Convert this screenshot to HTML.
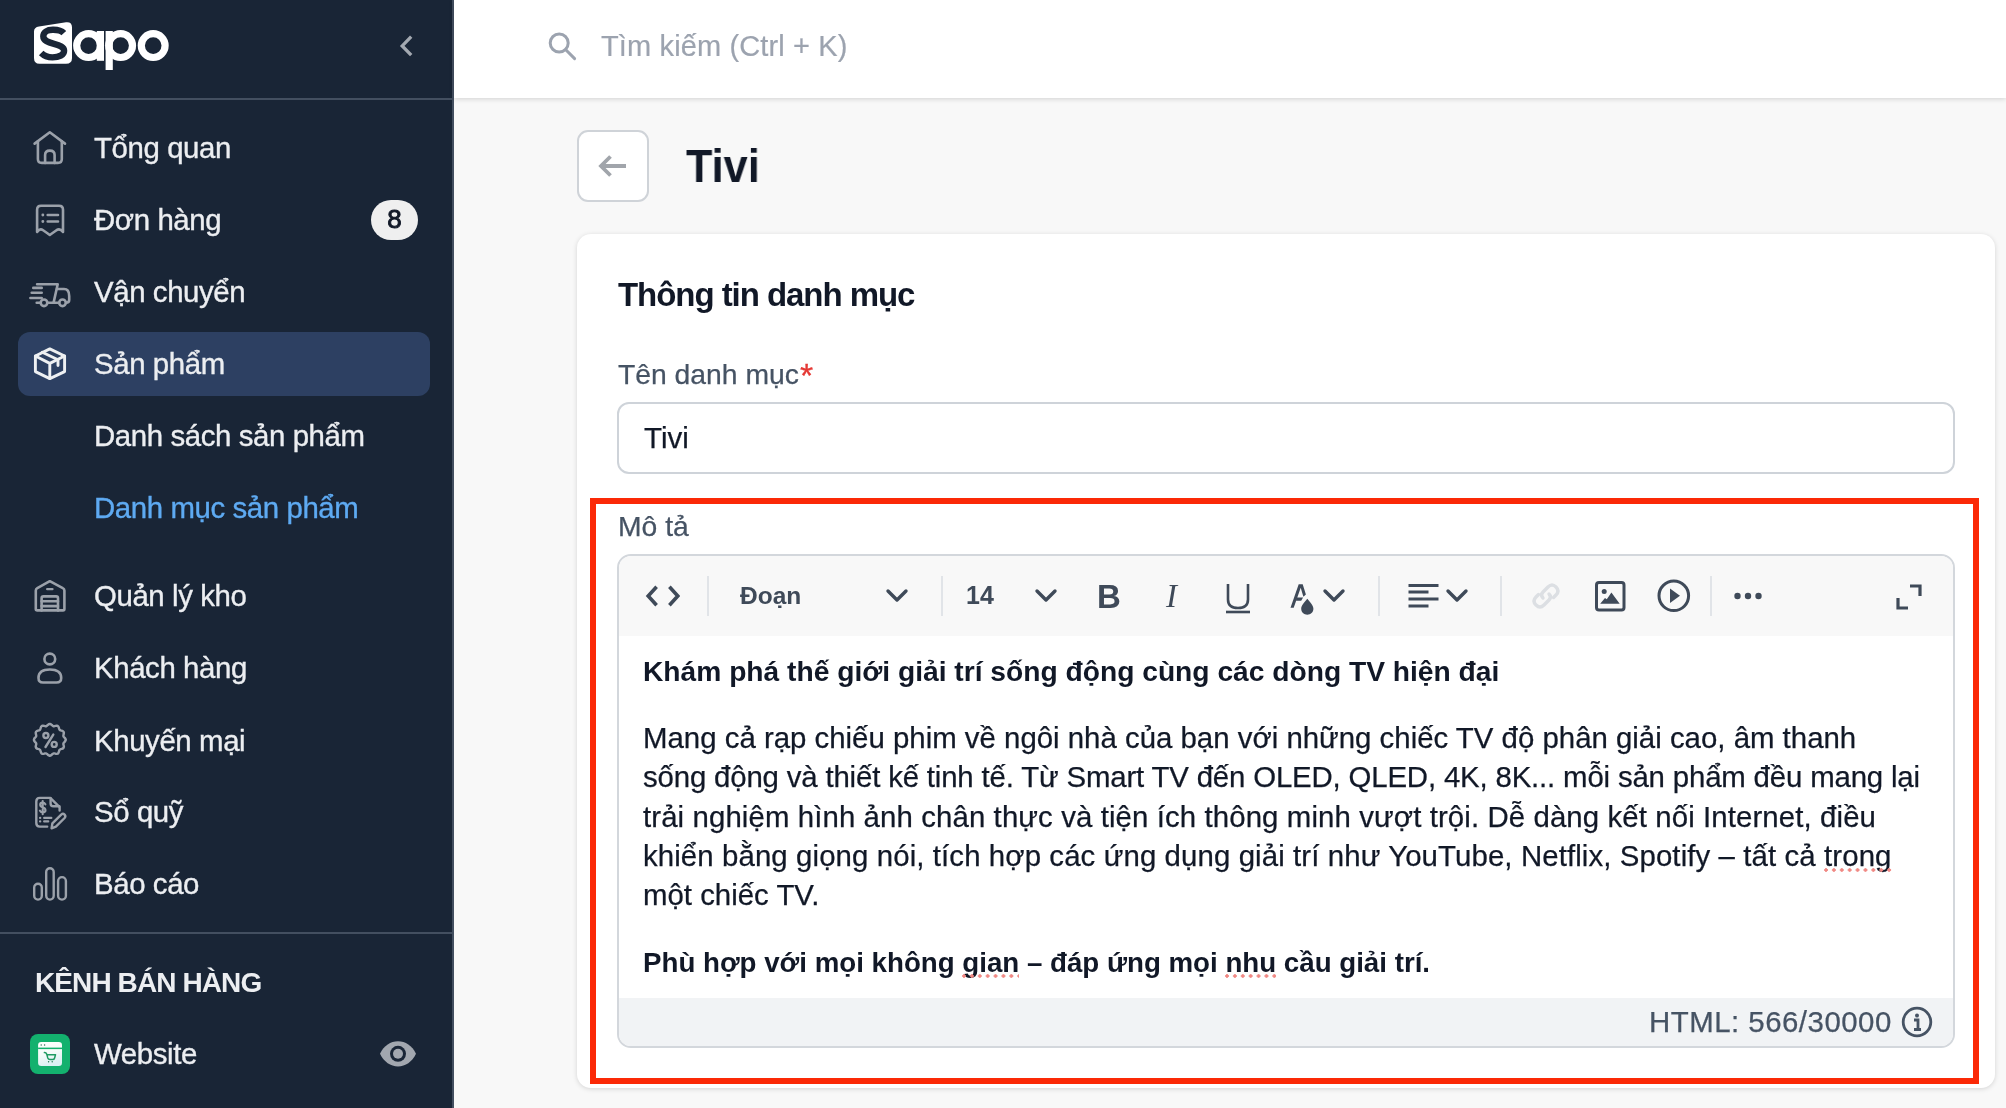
<!DOCTYPE html>
<html lang="vi">
<head>
<meta charset="utf-8">
<title>Sapo - Tivi</title>
<style>
*{box-sizing:border-box;margin:0;padding:0}
html,body{width:2006px;height:1108px;overflow:hidden}
body{position:relative;background:#f8f8f8;font-family:"Liberation Sans",sans-serif;color:#111827}
.t{position:absolute;line-height:1;white-space:nowrap;will-change:transform}
.abs{position:absolute}
#sb{position:absolute;left:0;top:0;width:452px;height:1108px;background:#192536}
#sbb{position:absolute;left:452px;top:0;width:2px;height:1108px;background:#434f60}
.hr{position:absolute;left:0;width:452px;height:2px;background:#434f60}
.nav{font-size:29.4px;letter-spacing:-0.4px;color:#eceef1;-webkit-text-stroke:0.35px}
.ic{position:absolute;fill:none;stroke:#9ba1aa;stroke-width:2.6;stroke-linecap:round;stroke-linejoin:round}
#hdr{position:absolute;left:454px;top:0;width:1552px;height:98px;background:#fff;box-shadow:0 1px 5px rgba(0,0,0,.16)}
.card{position:absolute;left:577px;top:234px;width:1418px;height:854px;background:#fff;border-radius:14px;box-shadow:0 1px 5px rgba(0,0,0,.15)}
.tb{position:absolute;fill:none;stroke:#3f4a59;stroke-width:3.4;stroke-linecap:round;stroke-linejoin:round}
.sep{position:absolute;top:576px;width:2px;height:40px;background:#e1e4e8}
.body{font-size:29.4px;color:#111827;-webkit-text-stroke:0.25px}
.sp{position:relative}
.sp::after{content:"";position:absolute;left:0;right:0;bottom:0.2px;height:4px;background:radial-gradient(circle at 2px 2px,#f08883 1.5px,transparent 2px) 0 0/7.9px 4px repeat-x}
</style>
</head>
<body>
<!-- SIDEBAR -->
<div id="sb"></div>
<div id="sbb"></div>
<div class="hr" style="top:98px"></div>
<div class="hr" style="top:932px"></div>

<!-- logo -->
<svg class="abs" style="left:0;top:0" width="200" height="90" viewBox="0 0 200 90">
  <path d="M39 26.5 L66 22.2 Q72 21.5 72 27.5 L72 58 Q72 63.8 66 63.8 L39.5 63.8 Q34 63.8 34 58 L34 31.5 Q34 27.3 39 26.5 Z" fill="#fff"/>
  <path d="M63.8 33.2 C60.6 29.6 56.6 29.75 52.8 29.75 C47 29.75 43.3 32.3 43.3 36.3 C43.3 40.8 48.5 42.3 54 43.8 C60 45.4 64.1 47 64.1 50.8 C64.1 55 59 57.4 52.5 57.4 C47.5 57.4 43.8 55.6 41.2 53" fill="none" stroke="#192536" stroke-width="6.4"/>
  <circle cx="88.6" cy="45.6" r="11.9" fill="none" stroke="#fff" stroke-width="7.2"/>
  <rect x="96.8" y="31" width="7.2" height="29.8" fill="#fff"/>
  <circle cx="120.6" cy="45.6" r="11.9" fill="none" stroke="#fff" stroke-width="7.2"/>
  <rect x="105.6" y="31" width="7.2" height="39" fill="#fff"/>
  <circle cx="153.2" cy="45.6" r="11.9" fill="none" stroke="#fff" stroke-width="7.2"/>
</svg>
<!-- collapse chevron -->
<svg class="ic" style="left:396px;top:32px;stroke-linecap:butt;stroke-linejoin:miter;stroke:#a3a9b1" width="20" height="28" viewBox="0 0 20 28"><path d="M15.2 4.6 L6.2 13.9 L15.2 23.2" stroke-width="3.3"/></svg>

<!-- nav icons -->
<!-- home -->
<svg class="ic" style="left:30px;top:128px" width="40" height="40" viewBox="0 0 40 40">
  <path d="M4.6 15.6 L19.8 4.3 L35 15.6"/>
  <path d="M7.9 13.2 V31 Q7.9 34.9 11.8 34.9 H27.9 Q31.8 34.9 31.8 31 V13.2"/>
  <path d="M15.1 34.9 V27 Q15.1 22.6 19.85 22.6 Q24.6 22.6 24.6 27 V34.9"/>
</svg>
<!-- orders -->
<svg class="ic" style="left:30px;top:200px" width="40" height="40" viewBox="0 0 40 40">
  <path d="M7.1 32 V9.8 Q7.1 5.8 11.1 5.8 H29 Q33 5.8 33 9.8 V32 Q30 28 26.5 30.2 Q23 32.6 19.8 35 Q16.6 32.6 13.1 30.2 Q9.8 28 7.1 32 Z"/>
  <path d="M17.7 15 H28 M17.7 21.5 H28"/>
  <path d="M12.8 15 h0.1 M12.8 21.5 h0.1" stroke-width="2.8"/>
</svg>
<!-- truck -->
<svg class="ic" style="left:24px;top:272px" width="54" height="44" viewBox="0 0 54 44">
  <path d="M13.1 12.3 H33.7 L29.6 30.6"/>
  <path d="M33 17 H40 Q45.2 17 45.2 24 V28 Q45.2 30.6 42 30.8"/>
  <path d="M12.7 30.8 H16.7 M23.3 30.8 H35.2"/>
  <circle cx="20" cy="30.8" r="3.3"/><circle cx="38.5" cy="30.8" r="3.3"/>
  <path d="M9.3 15.9 H17.7 M7.7 20.8 H17.7 M6.4 26 H17.7"/>
</svg>
<!-- active item bg -->
<div class="abs" style="left:18px;top:332px;width:412px;height:64px;background:#2d4062;border-radius:12px"></div>
<!-- box -->
<svg class="ic" style="left:30px;top:344px;stroke:#eef0f2;stroke-width:2.9" width="40" height="40" viewBox="0 0 40 40">
  <path d="M19.8 4.9 L34.6 12 V27.6 L19.8 34.6 L5.4 27.6 V12 Z"/>
  <path d="M5.4 12 L19.8 19.4 L34.6 12 M19.8 19.4 V34.6"/>
  <path d="M12.3 8.2 L28 15.8 V21.5"/>
</svg>
<!-- warehouse -->
<svg class="ic" style="left:30px;top:576px" width="40" height="40" viewBox="0 0 40 40">
  <path d="M5.8 33 V14.6 Q5.8 12.9 7.3 12.1 L19.8 5.2 L32.8 12.1 Q34.4 12.9 34.4 14.6 V33 Q34.4 34.4 33 34.4 H7.2 Q5.8 34.4 5.8 33 Z"/>
  <path d="M11.6 34.4 V22.3 Q11.6 20.4 13.5 20.4 H26.2 Q28 20.4 28 22.3 V34.4"/>
  <path d="M11.6 25.3 H28 M11.6 30.1 H28"/>
  <path d="M17.2 13.1 H22.4" stroke-width="2.4"/>
</svg>
<!-- person -->
<svg class="ic" style="left:30px;top:648px" width="40" height="40" viewBox="0 0 40 40">
  <circle cx="19.8" cy="11" r="5.4"/>
  <path d="M13 34.5 H26.5 Q31.2 34.5 31.2 30 Q31.2 21.5 19.8 21.5 Q8.5 21.5 8.5 30 Q8.5 34.5 13 34.5 Z"/>
</svg>
<!-- promo -->
<svg class="ic" style="left:30px;top:720px;stroke-width:2.4" width="40" height="40" viewBox="0 0 40 40">
  <path d="M19.8 3.9L20.8 4.2L21.8 4.9L22.6 5.7L23.4 6.2L24.4 6.2L25.5 5.9L26.7 5.7L27.8 6.0L28.5 6.8L28.9 7.9L29.2 9.0L29.7 9.9L30.6 10.4L31.7 10.7L32.8 11.1L33.6 11.8L33.9 12.9L33.7 14.1L33.4 15.2L33.4 16.2L33.9 17.0L34.7 17.8L35.4 18.8L35.8 19.8L35.4 20.8L34.7 21.8L33.9 22.6L33.4 23.4L33.4 24.4L33.7 25.5L33.9 26.7L33.6 27.8L32.8 28.5L31.7 28.9L30.6 29.2L29.7 29.7L29.2 30.6L28.9 31.7L28.5 32.8L27.8 33.6L26.7 33.9L25.5 33.7L24.4 33.4L23.4 33.4L22.6 33.9L21.8 34.7L20.8 35.4L19.8 35.8L18.8 35.4L17.8 34.7L17.0 33.9L16.2 33.4L15.2 33.4L14.1 33.7L12.9 33.9L11.8 33.6L11.1 32.8L10.7 31.7L10.4 30.6L9.9 29.7L9.0 29.2L7.9 28.9L6.8 28.5L6.0 27.8L5.7 26.7L5.9 25.5L6.2 24.4L6.2 23.4L5.7 22.6L4.9 21.8L4.2 20.8L3.9 19.8L4.2 18.8L4.9 17.8L5.7 17.0L6.2 16.2L6.2 15.2L5.9 14.1L5.7 12.9L6.0 11.8L6.8 11.1L7.9 10.7L9.0 10.4L9.9 9.9L10.4 9.0L10.7 7.9L11.1 6.8L11.8 6.0L12.9 5.7L14.1 5.9L15.2 6.2L16.2 6.2L17.0 5.7L17.8 4.9L18.8 4.2Z"/>
  <path d="M23.3 14.6 L15.5 27"/>
  <circle cx="15.9" cy="15.5" r="2.5"/><circle cx="24.2" cy="24.4" r="2.5"/>
</svg>
<!-- cashbook -->
<svg class="ic" style="left:30px;top:792px;stroke-width:2.4" width="40" height="40" viewBox="0 0 40 40">
  <path d="M17.2 34.6 H9.8 Q6.3 34.6 6.3 31 V9.5 Q6.3 5.9 9.8 5.9 H20.3 L29.6 15.2 V18.5"/>
  <path d="M20.6 6.2 V11.5 Q20.6 14.3 23.4 14.3 H29.4"/>
  <path d="M15.4 12.3 Q14.4 10.6 12.6 10.6 Q10.2 10.6 10.2 12.8 Q10.2 14.8 12.8 15.4 Q15.5 16 15.5 18.3 Q15.5 20.4 12.6 20.4 Q10.6 20.4 9.9 18.7 M12.7 9 V22.2" stroke-width="2.1"/>
  <path d="M14.2 25.9 H21.3 M14.2 29.4 H18.2 M10.1 25.9 h0.1 M10.1 29.4 h0.1" stroke-width="2.3"/>
  <path d="M21.6 36.3 L22.4 31.3 L31.2 22.6 Q33 21 34.6 22.6 Q36.1 24.3 34.6 26 L25.9 34.7 Z"/>
</svg>
<!-- chart -->
<svg class="ic" style="left:30px;top:864px;stroke-width:2.4" width="40" height="40" viewBox="0 0 40 40">
  <rect x="4.2" y="19.8" width="7.6" height="15.8" rx="3.8"/>
  <rect x="16.2" y="4.2" width="7.5" height="31.4" rx="3.75"/>
  <rect x="28.1" y="13.1" width="7.8" height="22.5" rx="3.9"/>
</svg>

<div class="t nav" style="left:94px;top:133.1px">Tổng quan</div>
<div class="t nav" style="left:94px;top:204.9px">Đơn hàng</div>
<div class="abs" style="left:371px;top:200px;width:47px;height:40px;border-radius:20px;background:#efefef"></div>
<div class="t" style="left:371px;top:206px;width:47px;text-align:center;font-size:26px;color:#111827;-webkit-text-stroke:0.9px">8</div>
<div class="t nav" style="left:94px;top:277.1px">Vận chuyển</div>
<div class="t nav" style="left:94px;top:349.1px">Sản phẩm</div>
<div class="t nav" style="left:94px;top:420.6px">Danh sách sản phẩm</div>
<div class="t nav" style="left:94px;top:493.1px;color:#5eaaf2">Danh mục sản phẩm</div>
<div class="t nav" style="left:94px;top:581.4px">Quản lý kho</div>
<div class="t nav" style="left:94px;top:653.1px">Khách hàng</div>
<div class="t nav" style="left:94px;top:725.5px">Khuyến mại</div>
<div class="t nav" style="left:94px;top:796.7px">Sổ quỹ</div>
<div class="t nav" style="left:94px;top:869.1px">Báo cáo</div>
<div class="t" style="left:35px;top:969px;font-size:28px;font-weight:700;letter-spacing:-0.9px;color:#eceef1">KÊNH BÁN HÀNG</div>
<!-- website icon -->
<svg class="abs" style="left:30px;top:1034px" width="40" height="40" viewBox="0 0 40 40">
  <defs><linearGradient id="wg" x1="0" y1="0" x2="0.3" y2="1"><stop offset="0" stop-color="#ffffff"/><stop offset="0.55" stop-color="#f4fbf8"/><stop offset="1" stop-color="#dcf0f3"/></linearGradient></defs>
  <rect x="0" y="0" width="40" height="40" rx="8" fill="#13b16e"/>
  <rect x="8.1" y="7.9" width="23.9" height="24.1" rx="3.2" fill="url(#wg)"/>
  <rect x="8.1" y="13.6" width="23.9" height="1.5" fill="#13b16e"/>
  <circle cx="11.2" cy="11" r="0.7" fill="#2a6b50"/><circle cx="14.6" cy="11" r="0.7" fill="#2a6b50"/>
  <path d="M14.4 18.6 Q16 18.4 16.8 20.4 L17.8 24 Q18.3 25.6 20 25.6 H22.6 Q24.2 25.6 24.6 24 L25.5 20.8 H17.2" fill="none" stroke="#1f9b62" stroke-width="1.5" stroke-linejoin="round" stroke-linecap="round"/>
  <circle cx="18.6" cy="27.7" r="0.7" fill="#1f7a52"/><circle cx="22.2" cy="27.7" r="0.7" fill="#1f7a52"/>
</svg>
<div class="t nav" style="left:94px;top:1039px">Website</div>
<!-- eye -->
<svg class="abs" style="left:378px;top:1040px" width="40" height="28" viewBox="0 0 40 28">
  <path d="M2 13.8 C6 5.5 12.5 1.3 20 1.3 C27.5 1.3 34 5.5 38 13.8 C34 22 27.5 26.4 20 26.4 C12.5 26.4 6 22 2 13.8 Z" fill="#a2a7af"/>
  <circle cx="20" cy="13.8" r="8" fill="#192536"/>
  <circle cx="20" cy="13.8" r="5" fill="#a2a7af"/>
</svg>

<!-- HEADER -->
<div id="hdr"></div>
<svg class="abs" style="left:546px;top:30px;fill:none;stroke:#9ca3af;stroke-width:3;stroke-linecap:round" width="34" height="34" viewBox="0 0 34 34">
  <circle cx="13.2" cy="13" r="9"/>
  <path d="M19.8 19.8 L28.6 28.6"/>
</svg>
<div class="t" style="left:601px;top:31.5px;font-size:29px;letter-spacing:0.13px;color:#9ca3af;-webkit-text-stroke:0.2px">Tìm kiếm (Ctrl + K)</div>

<!-- PAGE TITLE -->
<div class="abs" style="left:577px;top:130px;width:72px;height:72px;background:#fff;border:2px solid #cfd3d8;border-radius:11px"></div>
<svg class="abs" style="left:595px;top:148px;fill:none;stroke:#a1a5ab;stroke-width:3.8;stroke-linecap:butt" width="36" height="36" viewBox="0 0 36 36">
  <path d="M31 18 H6 M15.5 8.5 L6 18 L15.5 27.5"/>
</svg>
<div class="t" style="left:686px;top:143px;font-size:46px;font-weight:700;transform:scaleX(0.94);transform-origin:0 0;color:#111827">Tivi</div>

<!-- CARD -->
<div class="card"></div>
<div class="t" style="left:618px;top:277.5px;font-size:33px;font-weight:700;letter-spacing:-1.05px;color:#111827">Thông tin danh mục</div>
<div class="t" style="left:618px;top:360px;font-size:28.3px;color:#465364;-webkit-text-stroke:0.25px">Tên danh mục<span style="color:#e53935;display:inline-block;transform:scale(1.2);transform-origin:0 30%;margin-left:1px">*</span></div>
<div class="abs" style="left:617px;top:402px;width:1338px;height:72px;border:2px solid #ced3d9;border-radius:12px;background:#fff"></div>
<div class="t" style="left:644px;top:422.5px;font-size:29.5px;color:#111827;-webkit-text-stroke:0.25px">Tivi</div>

<!-- DESCRIPTION -->
<div class="t" style="left:618px;top:512px;font-size:28.3px;color:#465364;-webkit-text-stroke:0.25px">Mô tả</div>
<div class="abs" style="left:617px;top:554px;width:1338px;height:494px;border:2px solid #d3d7dc;border-radius:14px;background:#fff;overflow:hidden">
  <div class="abs" style="left:0;top:0;width:1334px;height:80px;background:#f8f8f8"></div>
  <div class="abs" style="left:0;top:442px;width:1334px;height:50px;background:#f1f3f5"></div>
</div>

<!-- toolbar -->
<svg class="tb" style="left:640px;top:576px;stroke-linecap:butt;stroke-linejoin:miter;stroke-width:3.6" width="46" height="40" viewBox="0 0 46 40"><path d="M16.6 10.8 L8.2 20 L16.6 29.2 M29.4 10.8 L37.8 20 L29.4 29.2"/></svg>
<div class="sep" style="left:707px"></div>
<div class="t" style="left:740px;top:583.5px;font-size:24.5px;font-weight:700;color:#3f4a59">Đoạn</div>
<svg class="tb" style="left:880px;top:580px" width="34" height="34" viewBox="0 0 34 34"><path d="M8 11 L17 20 L26 11"/></svg>
<div class="sep" style="left:941px"></div>
<div class="t" style="left:966px;top:583px;font-size:25px;font-weight:700;color:#3f4a59">14</div>
<svg class="tb" style="left:1029px;top:580px" width="34" height="34" viewBox="0 0 34 34"><path d="M8 11 L17 20 L26 11"/></svg>
<div class="t" style="left:1097px;top:580px;font-size:33px;font-weight:700;color:#3f4a59">B</div>
<div class="t" style="left:1166px;top:580px;font-size:33px;font-style:italic;font-family:'Liberation Serif',serif;color:#3f4a59">I</div>
<svg class="tb" style="left:1222px;top:578px" width="32" height="40" viewBox="0 0 32 40"><path d="M6 6 V21.5 Q6 30 16 30 Q26 30 26 21.5 V6" stroke-width="2.6" stroke-linecap="butt"/><path d="M4 34 H28" stroke-width="2.6" stroke-linecap="butt"/></svg>
<svg class="abs" style="left:1286px;top:578px;fill:none;stroke:#3f4a59" width="34" height="40" viewBox="0 0 34 40">
  <path d="M4.5 29.8 L12.7 6.3 H16.7 L19.9 16.6 L17.4 18.7 L14.7 9.8 L7.7 29.8 Z M11.3 19.6 H17.1 L15.2 22.8 H10.2 Z" fill="#3f4a59" stroke="none"/>
  <path d="M21.3 20.8 C24 24 27.4 27.5 27.4 30.8 C27.4 34.5 24.6 36.7 21.3 36.7 C18 36.7 15.2 34.5 15.2 30.8 C15.2 27.5 18.6 24 21.3 20.8 Z" fill="#3f4a59" stroke="none"/>
</svg>
<svg class="tb" style="left:1317px;top:580px" width="34" height="34" viewBox="0 0 34 34"><path d="M8 11 L17 20 L26 11"/></svg>
<div class="sep" style="left:1378px"></div>
<svg class="abs" style="left:1406px;top:580px;fill:#3f4a59" width="36" height="32" viewBox="0 0 36 32">
  <rect x="2.5" y="4" width="30" height="3"/><rect x="2.5" y="10.5" width="20" height="3"/><rect x="2.5" y="17.5" width="30" height="3"/><rect x="2.5" y="24.5" width="20" height="3"/>
</svg>
<svg class="tb" style="left:1440px;top:580px" width="34" height="34" viewBox="0 0 34 34"><path d="M8 11 L17 20 L26 11"/></svg>
<div class="sep" style="left:1500px"></div>
<svg class="abs" style="left:1528px;top:578px;fill:none;stroke:#dcdfe3;stroke-width:3.4;stroke-linecap:round" width="36" height="36" viewBox="0 0 36 36">
  <path d="M15 20 Q12 17 15 14 L20 9 Q24 5 28 9 Q32 13 28 17 L25.5 19.5"/>
  <path d="M21 16 Q24 19 21 22 L16 27 Q12 31 8 27 Q4 23 8 19 L10.5 16.5"/>
</svg>
<svg class="abs" style="left:1592px;top:578px" width="36" height="36" viewBox="0 0 36 36">
  <rect x="4.5" y="4.5" width="27.5" height="27.5" rx="2.5" fill="none" stroke="#3f4a59" stroke-width="3"/>
  <circle cx="12.2" cy="13.5" r="2.5" fill="#3f4a59"/>
  <path d="M8.2 25.8 L13 20.1 L14.8 21.2 L19.4 14.6 L27.7 25.8 Z" fill="#3f4a59"/>
</svg>
<svg class="abs" style="left:1656px;top:578px" width="36" height="36" viewBox="0 0 36 36">
  <circle cx="17.8" cy="17.8" r="14.8" fill="none" stroke="#3f4a59" stroke-width="3"/>
  <path d="M14 10.5 L24 17.8 L14 25 Z" fill="#3f4a59"/>
</svg>
<div class="sep" style="left:1710px"></div>
<svg class="abs" style="left:1732px;top:588px;fill:#3f4a59" width="32" height="16" viewBox="0 0 32 16">
  <circle cx="5.5" cy="8" r="3.2"/><circle cx="16" cy="8" r="3.2"/><circle cx="26.5" cy="8" r="3.2"/>
</svg>
<svg class="abs" style="left:1892px;top:580px;fill:none;stroke:#3f4a59;stroke-width:3.2;stroke-linecap:butt" width="34" height="34" viewBox="0 0 34 34">
  <path d="M18 6 H28 V16 M6 18 V28 H16"/>
</svg>

<!-- editor content -->
<div class="t" style="left:643px;top:656.8px;font-size:28.2px;font-weight:700;color:#111827">Khám phá thế giới giải trí sống động cùng các dòng TV hiện đại</div>
<div class="t body" style="left:643px;top:722.7px">Mang cả rạp chiếu phim về ngôi nhà của bạn với những chiếc TV độ phân giải cao, âm thanh</div>
<div class="t body" style="left:643px;top:761.6px;letter-spacing:-0.17px">sống động và thiết kế tinh tế. Từ Smart TV đến OLED, QLED, 4K, 8K... mỗi sản phẩm đều mang lại</div>
<div class="t body" style="left:643px;top:801.7px;letter-spacing:0.1px">trải nghiệm hình ảnh chân thực và tiện ích thông minh vượt trội. Dễ dàng kết nối Internet, điều</div>
<div class="t body" style="left:643px;top:840.9px;letter-spacing:0.1px">khiển bằng giọng nói, tích hợp các ứng dụng giải trí như YouTube, Netflix, Spotify – tất cả <span class="sp">trong</span></div>
<div class="t body" style="left:643px;top:879.7px">một chiếc TV.</div>
<div class="t" style="left:643px;top:949px;font-size:27.7px;font-weight:700;color:#111827">Phù hợp với mọi không <span class="sp">gian</span> – đáp ứng mọi <span class="sp">nhu</span> cầu giải trí.</div>

<!-- footer -->
<div class="t" style="left:1649px;top:1006.5px;font-size:29.4px;letter-spacing:0.5px;color:#465364;-webkit-text-stroke:0.25px">HTML: 566/30000</div>
<svg class="abs" style="left:1900px;top:1005px" width="34" height="34" viewBox="0 0 34 34">
  <circle cx="17" cy="17" r="13.8" fill="none" stroke="#465364" stroke-width="2.8"/>
  <circle cx="17" cy="10.5" r="2" fill="#465364"/>
  <path d="M14 15 H18 V24 M14 24.5 H21" fill="none" stroke="#465364" stroke-width="2.8"/>
</svg>

<!-- red highlight -->
<div class="abs" style="left:590px;top:498px;width:1389px;height:586px;border:6px solid #fb2907"></div>
</body>
</html>
